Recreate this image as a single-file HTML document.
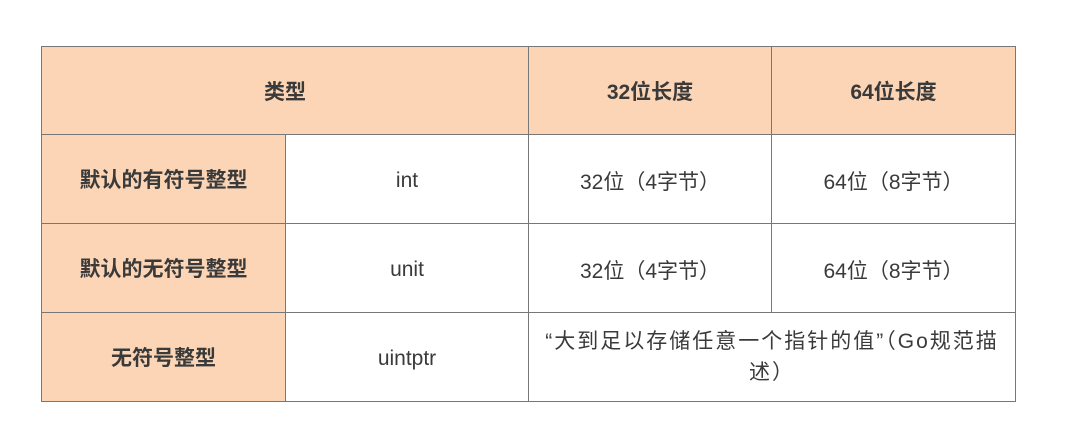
<!DOCTYPE html><html><head><meta charset="utf-8"><style>
body{margin:0;width:1075px;height:438px;background:#fff;font-family:"Liberation Sans","Noto Sans CJK SC",sans-serif;color:#3a3a3a;position:relative;overflow:hidden}
.c{position:absolute;box-sizing:border-box;display:flex;align-items:center;justify-content:center;text-align:center;font-size:21px;border:1px solid #777;margin:-1px 0 0 -1px;padding-top:3px}
.h{background:#fbd5b5;font-weight:bold;padding-top:0}
</style></head><body>
<div class="c h" style="left:42px;top:47px;width:488px;height:89px">类型</div>
<div class="c h" style="left:529px;top:47px;width:244px;height:89px">32位长度</div>
<div class="c h" style="left:772px;top:47px;width:245px;height:89px">64位长度</div>
<div class="c h" style="left:42px;top:135px;width:245px;height:90px">默认的有符号整型</div>
<div class="c" style="left:286px;top:135px;width:244px;height:90px">int</div>
<div class="c" style="left:529px;top:135px;width:244px;height:90px">32位（4字节）</div>
<div class="c" style="left:772px;top:135px;width:245px;height:90px">64位（8字节）</div>
<div class="c h" style="left:42px;top:224px;width:245px;height:90px">默认的无符号整型</div>
<div class="c" style="left:286px;top:224px;width:244px;height:90px">unit</div>
<div class="c" style="left:529px;top:224px;width:244px;height:90px">32位（4字节）</div>
<div class="c" style="left:772px;top:224px;width:245px;height:90px">64位（8字节）</div>
<div class="c h" style="left:42px;top:313px;width:245px;height:90px">无符号整型</div>
<div class="c" style="left:286px;top:313px;width:244px;height:90px">uintptr</div>
<div class="c" style="left:529px;top:313px;width:488px;height:90px;padding:0 10px;line-height:31px;letter-spacing:2px"><div>“大到足以存储任意一个指针的值”（Go规范描<br>述）</div></div>
</body></html>
